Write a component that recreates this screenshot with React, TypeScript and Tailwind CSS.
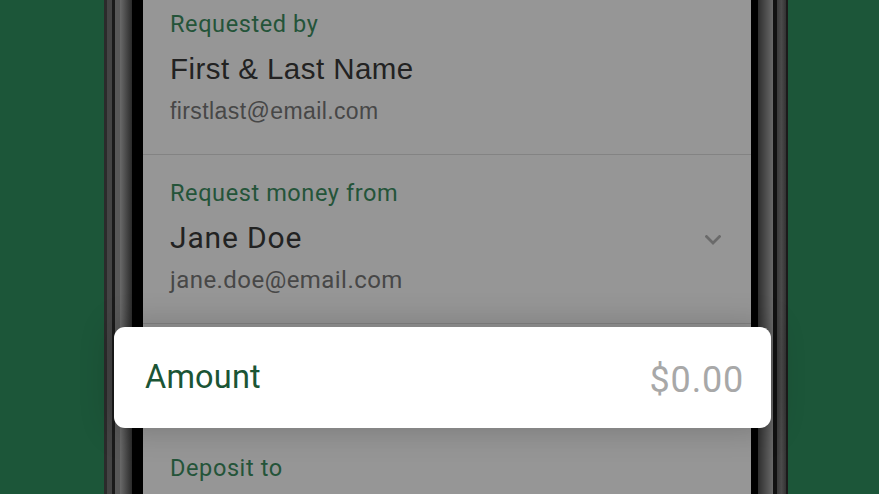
import React from "react";

function Chevron() {
  return (
    <svg width="16" height="10" viewBox="0 0 16 10" fill="none" className="mt-[8px]">
      <path d="M1.5 1.5 L8 8 L14.5 1.5" stroke="#6a6a6a" strokeWidth="2.7" strokeLinecap="square" />
    </svg>
  );
}

export default function App() {
  return (
    <div
      className="relative w-[879px] h-[494px] overflow-hidden bg-[#1c5639] flex"
      style={{ fontFamily: "Roboto, 'Liberation Sans', sans-serif" }}
    >
      <div className="ml-[104px] flex h-full">
        {/* left bezel */}
        <div className="flex h-full">
          <div className="w-[3px] bg-[#2b2b2b]" />
          <div className="w-[5px] bg-[#444444]" />
          <div className="w-[3px] bg-[#1a1a1a]" />
          <div className="w-[5px] bg-[#585858]" />
          <div className="w-[12px] bg-[linear-gradient(90deg,#6a6a6a,#2a2a2a)]" />
          <div className="w-[11px] bg-black" />
        </div>
        {/* screen */}
        <div className="w-[608px] h-full bg-[#969696] overflow-hidden">
          <div className="-mt-[14px] flex flex-col">
            {/* Requested by */}
            <div className="flex items-center pl-[27px] pr-[30px] pt-[24px] pb-[29px] border-b border-[#838383]">
              <div className="flex flex-col flex-1">
                <div className="text-[23.5px] leading-[28px] tracking-[0.6px] text-[#245439]">Requested by</div>
                <div className="mt-[12.7px] text-[29.5px] leading-[36px] tracking-[0.45px] text-[#222222] [font-family:'Liberation_Sans',Arial,sans-serif]">
                  First &amp; Last Name
                </div>
                <div className="mt-[10.3px] text-[23px] leading-[28px] tracking-[0.4px] text-[#474747] [font-family:'Liberation_Sans',Arial,sans-serif]">
                  firstlast@email.com
                </div>
              </div>
            </div>
            {/* Request money from */}
            <div className="flex items-center pl-[27px] pr-[30px] pt-[24px] pb-[29px] border-b border-[#838383]">
              <div className="flex flex-col flex-1">
                <div className="text-[23.5px] leading-[28px] tracking-[0.6px] text-[#245439]">Request money from</div>
                <div className="mt-[12.7px] text-[30px] leading-[36px] tracking-[0.85px] text-[#222222]">Jane Doe</div>
                <div className="mt-[10.3px] text-[24px] leading-[28px] tracking-[0.45px] text-[#474747]">jane.doe@email.com</div>
              </div>
              <Chevron />
            </div>
            <div className="h-[106px]" />
            <div className="pl-[27px] pt-[24px]">
              <div className="text-[23.5px] leading-[28px] tracking-[0.6px] text-[#245439]">Deposit to</div>
            </div>
          </div>
        </div>
        {/* right bezel */}
        <div className="flex h-full">
          <div className="w-[7px] bg-black" />
          <div className="w-[15px] bg-[linear-gradient(90deg,#2e2e2e,#6a6a6a)]" />
          <div className="w-[4px] bg-[#111111]" />
          <div className="w-[9px] bg-[linear-gradient(90deg,#3a3a3a,#4a4a4a,#333333)]" />
          <div className="w-[2px] bg-[#1a1a1a]" />
        </div>
      </div>

      {/* floating amount card */}
      <div className="absolute left-[114px] top-[327px] w-[657px] h-[101px] bg-white rounded-[11px] shadow-[0_0_34px_rgba(0,0,0,0.22)] flex items-center justify-between pl-[31px] pr-[27px]">
        <span className="text-[32.5px] leading-none tracking-[0.2px] text-[#1b5535]">Amount</span>
        <span className="text-[36px] leading-none tracking-[0.8px] text-[#a8a8a8] pt-[5px]">$0.00</span>
      </div>
    </div>
  );
}
